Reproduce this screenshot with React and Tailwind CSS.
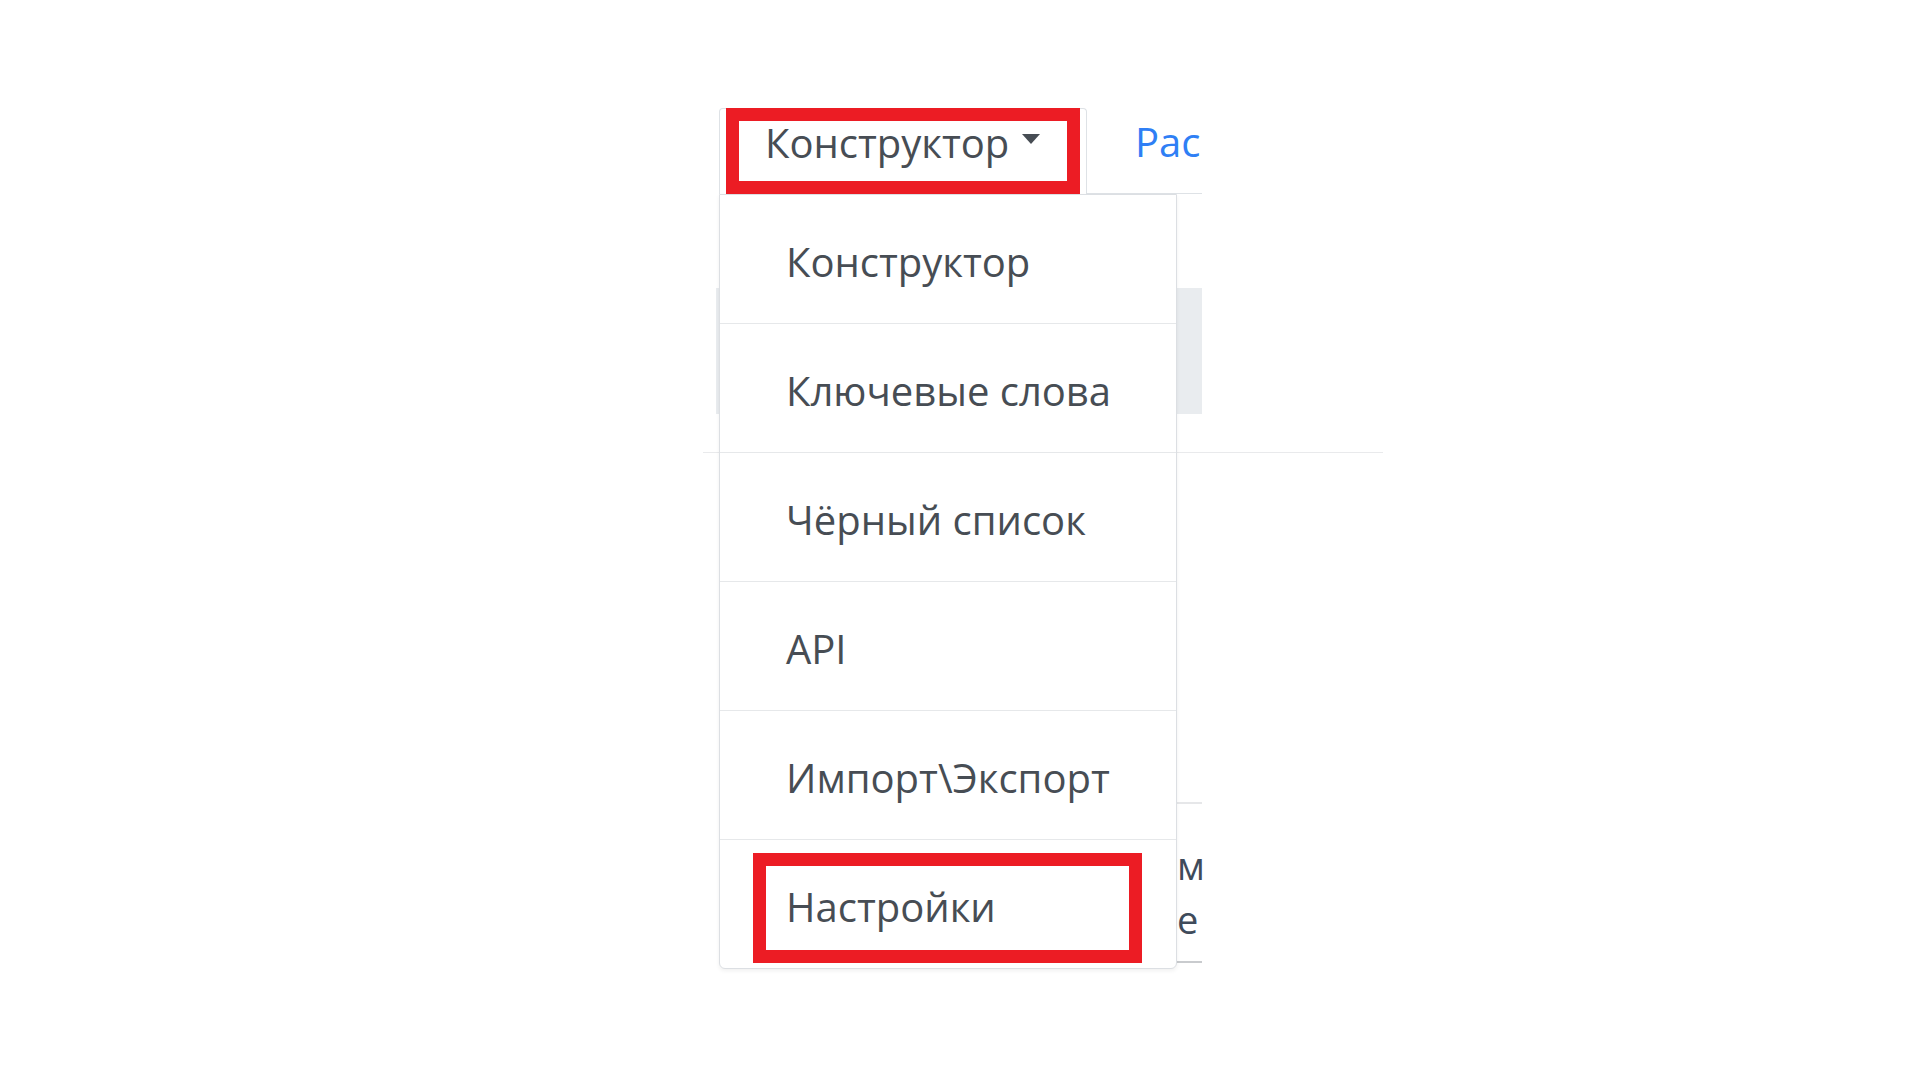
import React from 'react';

const items = ['Конструктор', 'Ключевые слова', 'Чёрный список', 'API', 'Импорт\\Экспорт', 'Настройки'];

const DropdownMenu = () => (
    <div className="absolute top-[86px] left-[16px] w-[458px] bg-white border border-[#dcdfe3] rounded-b-[6px] shadow-[0_2px_4px_rgba(0,0,0,0.06)]">
        {items.map((label, i) => (
            <div
                key={label}
                className={`h-[128px] flex items-center pl-[66px] pt-[5px] text-[40px] text-[#474d54] ${i < items.length - 1 ? 'border-b border-[#e6e8ea] h-[129px]' : ''}`}
            >
                {label}
            </div>
        ))}
    </div>
);

export default function App() {
    return (
        <div className="w-[1920px] h-[1080px] bg-white overflow-hidden" style={{ fontFamily: '"Open Sans", "Noto Sans", sans-serif' }}>
            <div className="ml-[703px] mt-[108px] w-[499px] relative">
                {/* tabs */}
                <div className="flex h-[86px]">
                    <div className="w-[16px]" />
                    <div className="w-[368px] border-x border-t border-[#dee2e6] rounded-t-[4px] flex items-center pl-[45px] pb-[18px] text-[40px] text-[#474d54]">
                        <span>Конструктор</span>
                        <span className="ml-[13px] mb-[8px] w-0 h-0 border-x-[9px] border-t-[10px] border-x-transparent border-t-[#474d54]" />
                    </div>
                    <div className="flex-1 border-b border-[#dee2e6] flex items-center pl-[48px] pb-[18px] overflow-hidden whitespace-nowrap text-[40px] text-[#2f7ff5]">
                        Рас
                    </div>
                </div>

                {/* page content behind the menu */}
                <div className="flex flex-col">
                    <div className="h-[94px]" />
                    <div className="ml-[13px] h-[126px] bg-[#e9ecef]" />
                    <div className="h-[38px]" />
                    <div className="w-[680px] h-px bg-[#e9eaec]" />
                    <div className="h-[349px]" />
                    <div className="ml-[474px] h-[2px] bg-[#e6e7e9]" />
                    <div className="ml-[474px] pt-[34px] flex flex-col text-[38px] leading-[54px] text-[#3f4b5b]">
                        <span>м</span>
                        <span>е</span>
                    </div>
                    <div className="ml-[474px] mt-[15px] h-[2px] bg-[#c9cbce]" />
                </div>

                <DropdownMenu />

                {/* annotation frames */}
                <div className="absolute left-[23px] top-0 w-[354px] h-[86px] border-[13px] border-[#ec1c24]" />
                <div className="absolute left-[50px] top-[745px] w-[389px] h-[110px] border-[13px] border-[#ec1c24]" />
            </div>
        </div>
    );
}
